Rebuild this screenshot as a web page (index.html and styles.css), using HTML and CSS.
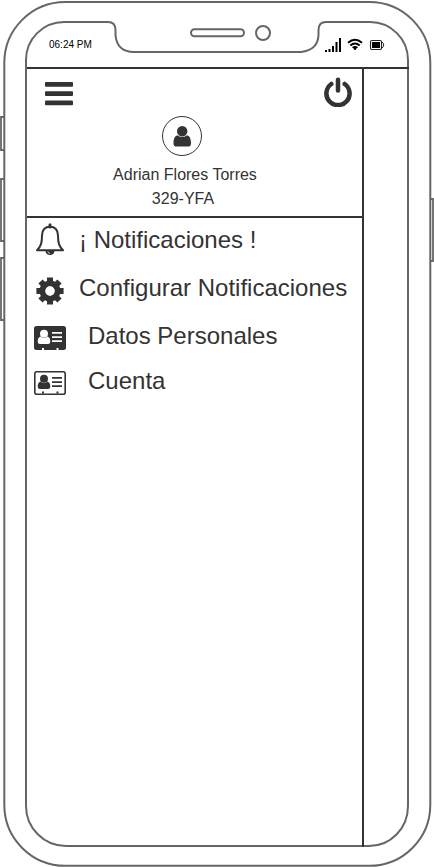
FILE: index.html
```
<!DOCTYPE html>
<html lang="es">
<head>
<meta charset="utf-8">
<title>Menú</title>
<link rel="stylesheet" href="styles.css">
</head>
<body>
<div class="phone">
  <svg class="frame" viewBox="0 0 434 867" fill="none" stroke="#666" stroke-width="2">
    <path d="M4 117H1V150H4M4 179H1V241H4M4 258H1V320H4M431 199H433V261H431" stroke-width="1.8"/>
    <rect x="4.3" y="2" width="426" height="863.8" rx="61"/>
    <path d="M26 62Q26 60 26 60C26 39 43 22 64 22H108Q115.500 22 115.500 30V35Q117 52 134 52H301Q318 50 318.500 35V30Q318.500 22 326 22H370C391 22 408 39 408 60V806C408 828 391 846 369 846H66C44 846 26 828 26 806Z"/>
    <rect x="191" y="29.200" width="53" height="7" rx="3.500"/>
    <circle cx="263" cy="33" r="7"/>
  </svg>
  <div class="screen">
    <header class="status">
      <span class="time">06:24 PM</span>
      <svg class="signals" viewBox="325 37 60 16">
        <path d="M325 50h2v2h-2zM328.500 49h2v3h-2zM332 46h2v6h-2zM335.500 42h2v10h-2zM339 38h2v14h-2z"/>
        <g fill="none" stroke="#000" stroke-width="2"><path d="M348 42.800Q355 36.800 362 42.800M350.300 45.500Q355 41.500 359.700 45.500M352.600 47.800Q355 46 357.400 47.800"/></g>
        <circle cx="355" cy="48.800" r="1.200"/>
        <rect x="370.500" y="40.500" width="11" height="9" rx="1.500" fill="none" stroke="#222" stroke-width="1.100"/>
        <path d="M372 42h8v6h-8z"/><path d="M381.500 41.500Q386 45 381.500 48.500" fill="none" stroke="#222"/>
      </svg>
    </header>
    <main class="drawer">
      <section class="profile">
        <div class="actions">
          <svg class="burger" viewBox="0 0 28 24"><rect y="0" width="28" height="4.800" rx="1"/><rect y="9.300" width="28" height="4.800" rx="1"/><rect y="18.500" width="28" height="4.800" rx="1"/></svg>
          <svg class="power" viewBox="0 0 28 30" fill="none" stroke="#333" stroke-width="4.500" stroke-linecap="round"><path d="M14 2.800V13.500M7.300 7A11.600 11.600 0 1 0 20.700 7"/></svg>
        </div>
        <svg class="avatar" viewBox="0 0 40 40"><circle cx="20" cy="20" r="19.500" fill="#fff" stroke="#333"/><circle cx="20.200" cy="15.200" r="5.200"/><path d="M15.500 19.200Q20.200 23 25 19.200C28 20 29 23 29 27.500Q29 30.600 26 30.600H14.500Q11.500 30.600 11.500 27.500C11.500 23 12.500 20 15.500 19.200Z"/></svg>
        <p>Adrian Flores Torres</p>
        <p>329-YFA</p>
      </section>
      <nav class="menu">
        <a class="item"><svg class="bell" viewBox="0 0 30 34"><path d="M2 27.200C6 23 7 20 7 12.500Q7.300 3.800 15 3.800T23 12.500C23 20 24 23 28 27.200Z" fill="none" stroke="#333" stroke-width="2" stroke-linejoin="round"/><path d="M15 1.800V4" stroke="#333" stroke-width="3" stroke-linecap="round"/><path d="M10.500 28H19.500Q19 32 15 32T10.500 28Z"/><path d="M13 28.500Q13 30.300 15 30.400" fill="none" stroke="#fff" stroke-width=".7"/></svg>¡ Notificaciones !</a>
        <a class="item"><svg class="gear" viewBox="0 0 28 28"><g stroke="#333" stroke-width="6"><path d="M14 .4V6M14 22V27.600M.4 14H6M22 14H27.600M4.500 4.500L8 8M20 20L23.500 23.500M23.500 4.500L20 8M8 20L4.500 23.500"/></g><circle cx="14" cy="14" r="7.500" fill="none" stroke="#333" stroke-width="6"/><circle cx="14" cy="14" r="4.700" fill="#fff"/></svg>Configurar Notificaciones</a>
        <a class="item card"><svg class="badge" viewBox="0 0 32 24"><rect width="32" height="24" rx="2.500"/><g fill="#fff"><circle cx="10" cy="7.800" r="4"/><path d="M6.500 10.500Q10 13.500 13.500 10.500Q16.300 11.500 16.300 15.500Q16.300 18 14 18H6Q3.700 18 3.700 15.500Q3.700 11.500 6.500 10.500ZM18 6h10v1.700H18zM18 10.200h10v1.700H18zM18 14.300h10v1.700H18zM8 22h2v2H8zM22.500 22h2v2h-2z"/></g></svg>Datos Personales</a>
        <a class="item account"><svg class="badge" viewBox="0 0 32 24"><rect x=".8" y=".8" width="30.400" height="22.400" rx="2" fill="#fff" stroke="#333" stroke-width="1.600"/><circle cx="10" cy="7.800" r="4"/><path d="M6.500 10.500Q10 13.500 13.500 10.500Q16.300 11.500 16.300 15.500Q16.300 18 14 18H6Q3.700 18 3.700 15.500Q3.700 11.500 6.500 10.500ZM18 6h10v1.700H18zM18 10.200h10v1.700H18zM18 14.300h10v1.700H18zM8 20.500h2v2H8zM22.500 20.500h2v2h-2z"/></svg>Cuenta</a>
      </nav>
    </main>
  </div>
</div>
</body>
</html>
```
FILE: styles.css
```
* {
  box-sizing: border-box;
}

body {
  margin: 0;
  background: #fff;
  color: #333;
  font-family: "Liberation Sans", Arial, sans-serif;
}

svg {
  display: block;
  flex: none;
  fill: #333;
}

.phone {
  position: relative;
  width: 434px;
  height: 867px;
  overflow: hidden;
}

.frame {
  position: absolute;
  inset: 0;
  width: 434px;
  height: 867px;
  fill: none;
}

.screen {
  position: relative;
  display: flex;
  flex-direction: column;
  height: 847px;
  padding: 22px 25px 0 27px;
}

.status {
  display: flex;
  justify-content: space-between;
  height: 47px;
  padding: 15px 24px 0 22px;
  border-bottom: 2px solid #333;
  color: #000;
}

.time {
  font-size: 10px;
  line-height: 15px;
}

.signals {
  width: 60px;
  height: 16px;
  fill: #000;
}

.drawer {
  flex: 1;
  width: 337px;
  border-right: 2px solid #333;
}

.profile {
  display: flex;
  flex-direction: column;
  align-items: center;
  height: 149px;
  border-bottom: 2px solid #333;
}

.actions {
  display: flex;
  justify-content: space-between;
  align-items: flex-start;
  width: 100%;
  height: 47px;
  padding: 8px 10px 0 18px;
}

.burger {
  width: 28px;
  height: 24px;
  margin-top: 5px;
}

.power {
  width: 28px;
  height: 30px;
  fill: none;
}

.avatar {
  width: 40px;
  height: 40px;
  margin: 0 26px 7px 0;
}

.profile p {
  margin: 0 19px 0 0;
  font-size: 16px;
  line-height: 24px;
}

.profile p:last-child {
  margin-right: 23px;
}

.menu {
  display: flex;
  flex-direction: column;
  padding-left: 7px;
  margin-top: -2px;
}

.item {
  display: flex;
  align-items: center;
  height: 48px;
  font-size: 24px;
  line-height: 48px;
  white-space: nowrap;
}

.card {
  height: 47px;
}

.account {
  height: 44px;
}

.bell {
  width: 30px;
  height: 34px;
  margin: 0 14px 0 1px;
}

.gear {
  width: 28px;
  height: 28px;
  margin: 6px 15px 0 2px;
}

.badge {
  width: 32px;
  height: 24px;
  margin: 5px 22px 0 0;
}

.account .badge {
  margin-top: 3px;
}
```
